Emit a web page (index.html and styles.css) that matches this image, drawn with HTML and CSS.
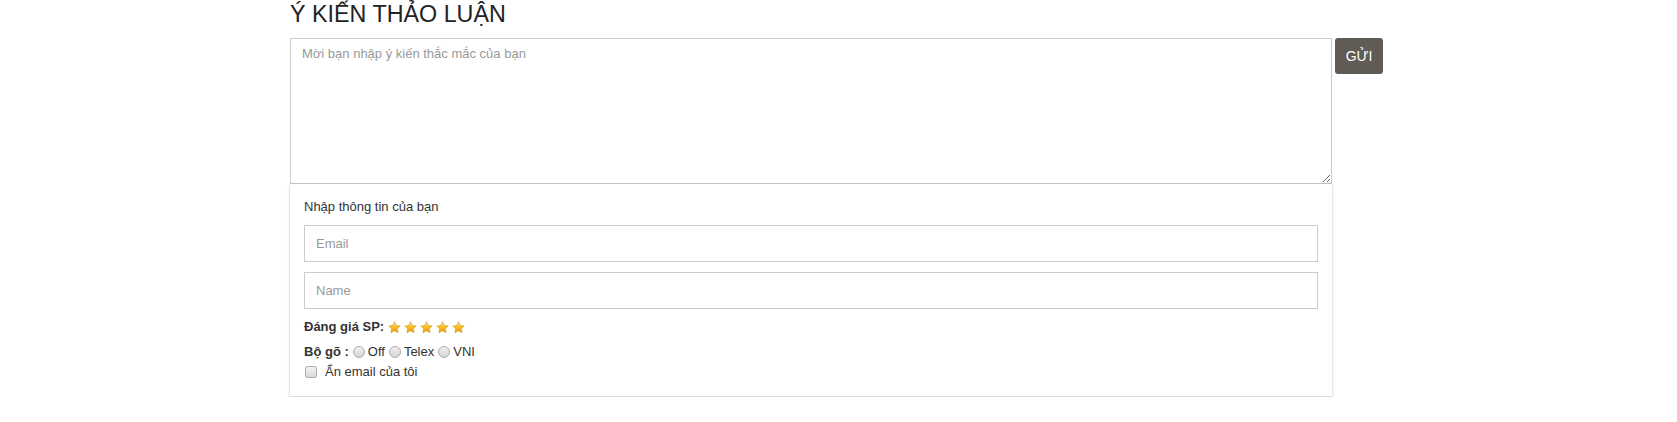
FILE: index.html
```html
<!DOCTYPE html>
<html lang="vi">
<head>
<meta charset="utf-8">
<title>Ý kiến thảo luận</title>
<link rel="stylesheet" href="styles.css">
</head>
<body>
<div class="wrap">
  <h2 class="title">Ý KIẾN THẢO LUẬN</h2>
  <div class="row">
    <div class="main">
      <textarea class="comment" placeholder="Mời bạn nhập ý kiến thắc mắc của bạn"></textarea>
      <div class="panel">
        <div class="label">Nhập thông tin của bạn</div>
        <input class="field" type="text" placeholder="Email">
        <input class="field" type="text" placeholder="Name">
        <div class="rate">
          <b>Đáng giá SP:</b>
          <span class="stars">
            <svg class="star" viewBox="0 0 24 24"><defs><linearGradient id="sg" x1="0" y1="0" x2="0" y2="1"><stop offset="0" stop-color="#ffe873"/><stop offset="0.5" stop-color="#fbbd23"/><stop offset="1" stop-color="#ee9410"/></linearGradient></defs><path d="M12 1.5l3.2 6.9 7.4.8-5.5 5 1.6 7.4L12 17.9l-6.7 3.7 1.6-7.4-5.5-5 7.4-.8z" fill="url(#sg)" stroke="#dc8f14" stroke-width="1"/></svg>
            <svg class="star" viewBox="0 0 24 24"><path d="M12 1.5l3.2 6.9 7.4.8-5.5 5 1.6 7.4L12 17.9l-6.7 3.7 1.6-7.4-5.5-5 7.4-.8z" fill="url(#sg)" stroke="#dc8f14" stroke-width="1"/></svg>
            <svg class="star" viewBox="0 0 24 24"><path d="M12 1.5l3.2 6.9 7.4.8-5.5 5 1.6 7.4L12 17.9l-6.7 3.7 1.6-7.4-5.5-5 7.4-.8z" fill="url(#sg)" stroke="#dc8f14" stroke-width="1"/></svg>
            <svg class="star" viewBox="0 0 24 24"><path d="M12 1.5l3.2 6.9 7.4.8-5.5 5 1.6 7.4L12 17.9l-6.7 3.7 1.6-7.4-5.5-5 7.4-.8z" fill="url(#sg)" stroke="#dc8f14" stroke-width="1"/></svg>
            <svg class="star" viewBox="0 0 24 24"><path d="M12 1.5l3.2 6.9 7.4.8-5.5 5 1.6 7.4L12 17.9l-6.7 3.7 1.6-7.4-5.5-5 7.4-.8z" fill="url(#sg)" stroke="#dc8f14" stroke-width="1"/></svg>
          </span>
        </div>
        <div class="ime">
          <b>Bộ gõ :</b>
          <label class="opt"><input class="radio" type="radio" name="ime">Off</label>
          <label class="opt"><input class="radio" type="radio" name="ime">Telex</label>
          <label class="opt"><input class="radio" type="radio" name="ime">VNI</label>
        </div>
        <label class="hide"><input class="check" type="checkbox">Ẩn email của tôi</label>
      </div>
    </div>
    <button class="send" type="button">GỬI</button>
  </div>
</div>
</body>
</html>
```

FILE: styles.css
```css
html, body {
  margin: 0;
  padding: 0;
  background: #fff;
}
body {
  font-family: "Liberation Sans", Arial, sans-serif;
  font-size: 13px;
  color: #333;
}
.wrap {
  width: 1097px;
  margin: 0 auto;
}
.title {
  margin: 0 0 10px;
  font-size: 23.3px;
  line-height: 28px;
  font-weight: normal;
  color: #222;
}
.row {
  display: flex;
  align-items: flex-start;
  gap: 3px;
}
.main {
  width: 1042px;
  display: flex;
  flex-direction: column;
}
.comment {
  display: block;
  box-sizing: border-box;
  width: 100%;
  height: 146px;
  margin: 0;
  padding: 6px 11px;
  border: 1px solid #ccc;
  border-radius: 0;
  font-family: "Liberation Sans", Arial, sans-serif;
  font-size: 13px;
  line-height: 18px;
  color: #333;
  outline: none;
}
.comment::placeholder,
.field::placeholder {
  color: #999;
}
.panel {
  display: flex;
  flex-direction: column;
  padding: 14px 14px 15px;
  background: #fff;
  border-bottom: 1px solid #dcdcdc;
  box-shadow: 0 1px 3px rgba(0, 0, 0, 0.2), 0 0 1px rgba(0, 0, 0, 0.12);
}
.label {
  line-height: 18px;
  margin-bottom: 9px;
}
.field {
  box-sizing: border-box;
  width: 100%;
  height: 37px;
  margin: 0 0 10px;
  padding: 0 11px;
  border: 1px solid #ccc;
  border-radius: 0;
  font-family: "Liberation Sans", Arial, sans-serif;
  font-size: 13px;
  color: #333;
  outline: none;
}
.rate {
  display: flex;
  align-items: center;
  line-height: 18px;
  margin-top: -1px;
}
.rate b {
  margin-right: 4px;
}
.stars {
  display: flex;
  gap: 3px;
}
.star {
  width: 13px;
  height: 13px;
  display: block;
}
.ime {
  display: flex;
  align-items: center;
  line-height: 18px;
  margin-top: 7px;
}
.ime b {
  margin-right: 4px;
}
.opt {
  display: flex;
  align-items: center;
  margin-right: 4px;
}
.radio {
  appearance: none;
  -webkit-appearance: none;
  width: 12px;
  height: 12px;
  margin: 0 3px 0 0;
  border: 1px solid #adadad;
  border-radius: 50%;
  background: linear-gradient(#f0f0f0, #d6d6d6);
  box-sizing: border-box;
}
.hide {
  display: flex;
  align-items: center;
  line-height: 18px;
  margin-top: 2px;
}
.check {
  appearance: none;
  -webkit-appearance: none;
  width: 12px;
  height: 12px;
  margin: 0 8px 0 1px;
  border: 1px solid #adadad;
  border-radius: 2px;
  background: linear-gradient(#f4f4f4, #d8d8d8);
  box-sizing: border-box;
}
.send {
  width: 48px;
  height: 36px;
  margin-top: 0;
  padding: 0;
  border: none;
  border-radius: 3px;
  background: #615b55;
  color: #fff;
  font-family: "Liberation Sans", Arial, sans-serif;
  font-size: 14px;
  cursor: pointer;
}
```
